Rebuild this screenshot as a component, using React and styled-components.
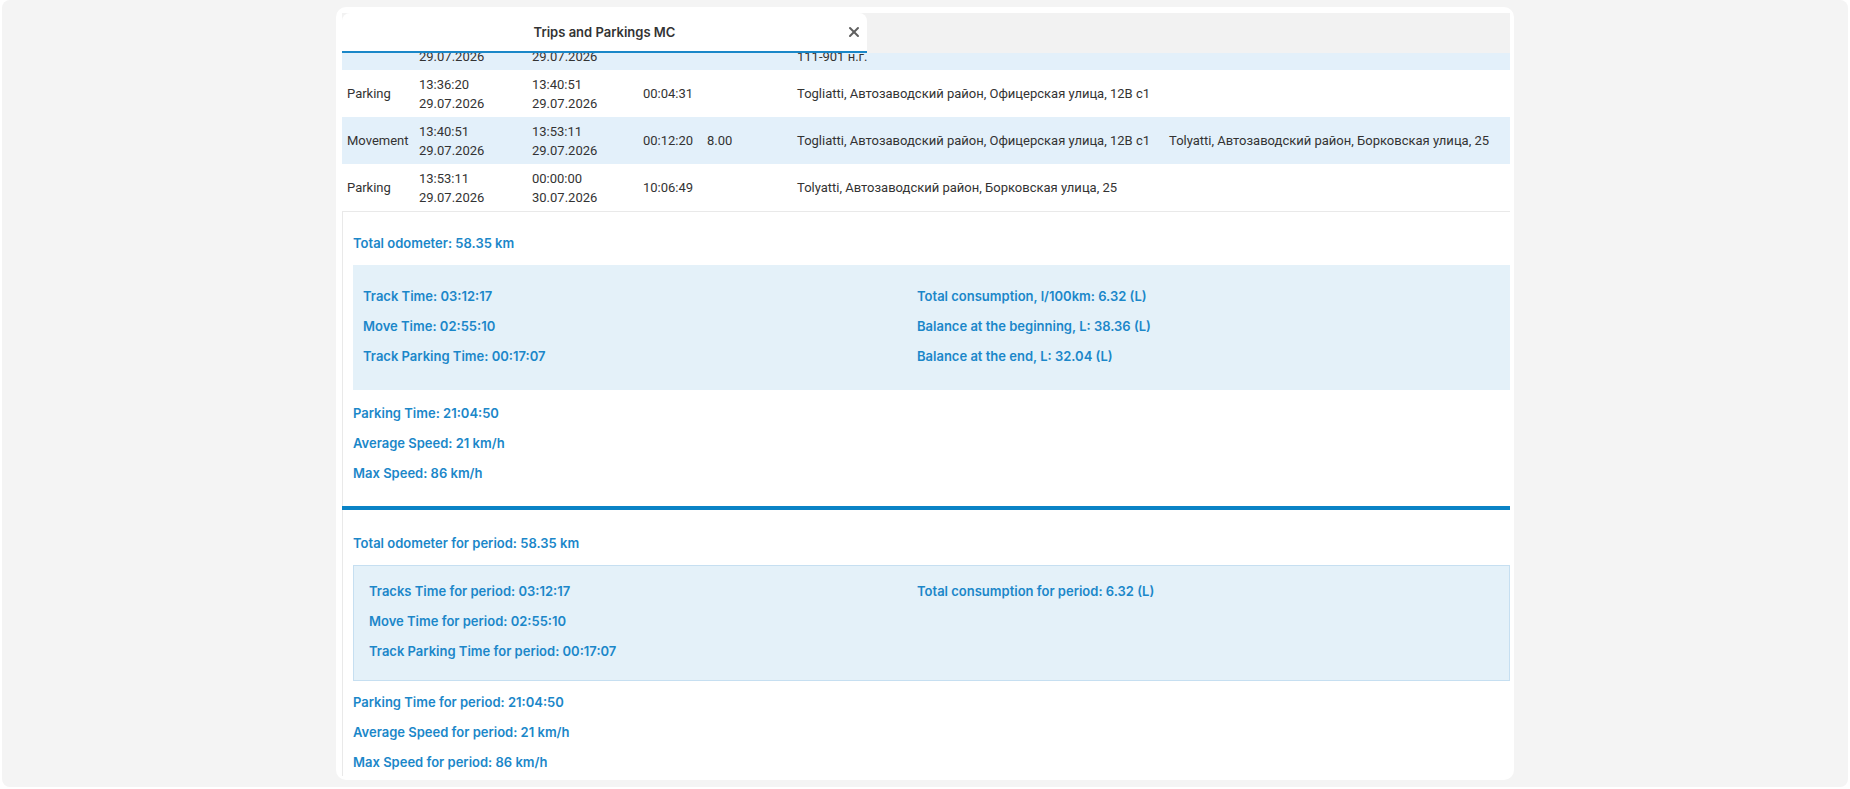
import styled, { createGlobalStyle } from "styled-components";
import { X } from "lucide-react";

const GlobalStyle = createGlobalStyle`
  html, body {
    margin: 0;
    padding: 0;
    background: #ffffff;
    font-family: Inter, "Noto Sans", "Liberation Sans", sans-serif;
  }
  * { box-sizing: border-box; }
`;

const Page = styled.div`
  margin: 0 2px;
  height: 787px;
  padding-top: 7px;
  background: #f4f4f4;
  border-radius: 8px;
  display: flex;
  justify-content: center;
  align-items: flex-start;
`;

const Panel = styled.div`
  width: 1178px;
  height: 773px;
  background: #ffffff;
  border-radius: 10px;
  padding: 6px 4px 4px 6px;
  display: flex;
`;

const Scroller = styled.div`
  flex: 1;
  overflow: hidden;
  display: flex;
  flex-direction: column;
`;

const HeaderBand = styled.div`
  height: 40px;
  flex-shrink: 0;
  background: #f2f2f2;
  display: flex;
`;

const TitleBox = styled.div`
  width: 525px;
  background: #ffffff;
  border-radius: 8px 8px 0 0;
  border-bottom: 2px solid #1a87c8;
  display: flex;
  align-items: center;
  justify-content: center;
  position: relative;
`;

const Title = styled.div`
  font-size: 13px;
  font-weight: 600;
  color: #333333;
`;

const Close = styled.button`
  position: absolute;
  right: 5px;
  top: 11px;
  border: none;
  background: none;
  padding: 0;
  width: 16px;
  height: 16px;
  color: #5f5f5f;
  display: flex;
  align-items: center;
  justify-content: center;
  cursor: pointer;
`;

const Clip = styled.div`
  height: 17px;
  overflow: hidden;
  display: flex;
  flex-direction: column;
  justify-content: flex-end;
  flex-shrink: 0;
`;

const Row = styled.div`
  display: grid;
  grid-template-columns: 72px 113px 111px 64px 90px 372px 1fr;
  align-items: center;
  min-height: 47px;
  flex-shrink: 0;
  padding: 4px 0;
  background: ${(p) => (p.$alt ? "#e3f0fa" : "#ffffff")};
  font-family: Roboto, "Liberation Sans", sans-serif;
  font-size: 13px;
  line-height: 19px;
  color: #333333;
`;

const Cell = styled.div`
  padding-left: 5px;
  white-space: nowrap;
`;

const Summary = styled.div`
  flex-shrink: 0;
  border-left: 1px solid #e9e9e9;
  border-top: ${(p) => (p.$first ? "1px solid #e9e9e9" : "none")};
  padding: ${(p) => (p.$first ? "16px" : "18px")} 0 18px 10px;
`;

const Divider = styled.div`
  height: 4px;
  flex-shrink: 0;
  background: #0a83c6;
`;

const Line = styled.div`
  font-size: 13px;
  font-weight: 600;
  line-height: 30px;
  color: #1b87c9;
  white-space: nowrap;
`;

const Box = styled.div`
  display: flex;
  background: #e4f1f9;
  border: ${(p) => (p.$bordered ? "1px solid #c6dff1" : "none")};
  padding: ${(p) => (p.$bordered ? "10px 0 14px 15px" : "16px 0 19px 10px")};
  margin: 7px 0 ${(p) => (p.$bordered ? "6px" : "8px")};
`;

const Column = styled.div`
  width: ${(p) => (p.$w ? `${p.$w}px` : "auto")};
  flex-shrink: 0;
`;

const rows = [
  {
    type: "Parking",
    start: ["13:36:20", "29.07.2026"],
    end: ["13:40:51", "29.07.2026"],
    dur: "00:04:31",
    km: "",
    from: "Togliatti, Автозаводский район, Офицерская улица, 12В с1",
    to: "",
  },
  {
    type: "Movement",
    start: ["13:40:51", "29.07.2026"],
    end: ["13:53:11", "29.07.2026"],
    dur: "00:12:20",
    km: "8.00",
    from: "Togliatti, Автозаводский район, Офицерская улица, 12В с1",
    to: "Tolyatti, Автозаводский район, Борковская улица, 25",
  },
  {
    type: "Parking",
    start: ["13:53:11", "29.07.2026"],
    end: ["00:00:00", "30.07.2026"],
    dur: "10:06:49",
    km: "",
    from: "Tolyatti, Автозаводский район, Борковская улица, 25",
    to: "",
  },
];

function TwoLines({ value }) {
  return (
    <>
      {value[0]}
      <br />
      {value[1]}
    </>
  );
}

function App() {
  return (
    <>
      <GlobalStyle />
      <Page>
        <Panel>
          <Scroller>
            <HeaderBand>
              <TitleBox>
                <Title>Trips and Parkings MC</Title>
                <Close>
                  <X size={16} strokeWidth={3} />
                </Close>
              </TitleBox>
            </HeaderBand>

            <Clip>
              <Row $alt>
                <Cell>Movement</Cell>
                <Cell>
                  <TwoLines value={["13:12:05", "29.07.2026"]} />
                </Cell>
                <Cell>
                  <TwoLines value={["13:36:20", "29.07.2026"]} />
                </Cell>
                <Cell>00:24:15</Cell>
                <Cell>9.12</Cell>
                <Cell>
                  <TwoLines value={["Togliatti, Автозаводский район,", "111-901 н.г."]} />
                </Cell>
                <Cell />
              </Row>
            </Clip>

            {rows.map((r, i) => (
              <Row key={`row-${i}`} $alt={i % 2 === 1}>
                <Cell>{r.type}</Cell>
                <Cell>
                  <TwoLines value={r.start} />
                </Cell>
                <Cell>
                  <TwoLines value={r.end} />
                </Cell>
                <Cell>{r.dur}</Cell>
                <Cell>{r.km}</Cell>
                <Cell>{r.from}</Cell>
                <Cell>{r.to}</Cell>
              </Row>
            ))}

            <Summary $first>
              <Line>Total odometer: 58.35 km</Line>
              <Box>
                <Column $w={554}>
                  <Line>Track Time: 03:12:17</Line>
                  <Line>Move Time: 02:55:10</Line>
                  <Line>Track Parking Time: 00:17:07</Line>
                </Column>
                <Column>
                  <Line>Total consumption, l/100km: 6.32 (L)</Line>
                  <Line>Balance at the beginning, L: 38.36 (L)</Line>
                  <Line>Balance at the end, L: 32.04 (L)</Line>
                </Column>
              </Box>
              <Line>Parking Time: 21:04:50</Line>
              <Line>Average Speed: 21 km/h</Line>
              <Line>Max Speed: 86 km/h</Line>
            </Summary>

            <Divider />

            <Summary>
              <Line>Total odometer for period: 58.35 km</Line>
              <Box $bordered>
                <Column $w={548}>
                  <Line>Tracks Time for period: 03:12:17</Line>
                  <Line>Move Time for period: 02:55:10</Line>
                  <Line>Track Parking Time for period: 00:17:07</Line>
                </Column>
                <Column>
                  <Line>Total consumption for period: 6.32 (L)</Line>
                </Column>
              </Box>
              <Line>Parking Time for period: 21:04:50</Line>
              <Line>Average Speed for period: 21 km/h</Line>
              <Line>Max Speed for period: 86 km/h</Line>
            </Summary>
          </Scroller>
        </Panel>
      </Page>
    </>
  );
}

export default App;
